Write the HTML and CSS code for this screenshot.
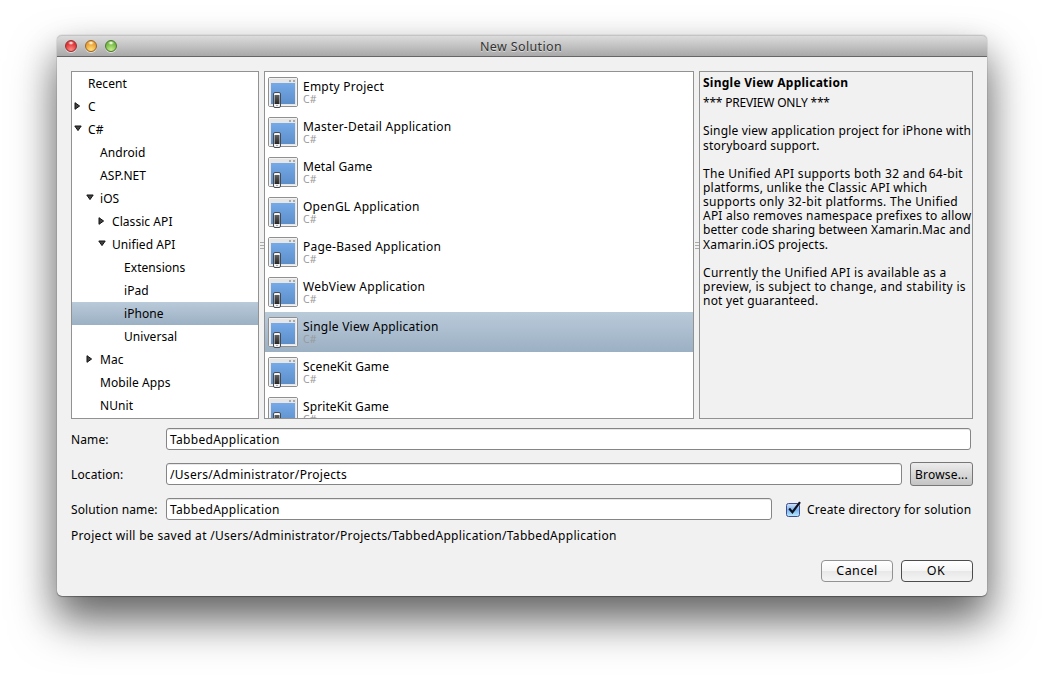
FILE: index.html
```
<!DOCTYPE html>
<html lang="en">
<head>
<meta charset="utf-8">
<title>New Solution</title>
<link rel="stylesheet" href="styles.css">
</head>
<body>
<svg class="defs" width="0" height="0" aria-hidden="true">
  <defs>
    <linearGradient id="blue" x1="0" y1="0" x2="0" y2="1"><stop offset="0" stop-color="#75a9e7"/><stop offset="1" stop-color="#5c8fca"/></linearGradient>
    <linearGradient id="screen" x1="0" y1="0" x2="0" y2="1"><stop offset="0" stop-color="#606060"/><stop offset="1" stop-color="#252525"/></linearGradient>
    <symbol id="project" viewBox="0 0 30 31">
      <rect x=".5" y=".5" width="29" height="29" rx="1.5" fill="#e6e6e6" stroke="#8f8f8f"/>
      <rect x="1.5" y="1.5" width="27" height="27" fill="none" stroke="#f2f2f2"/>
      <rect x="3" y="6" width="24" height="21" fill="url(#blue)"/>
      <path d="M21 3h2v2h-2zM25 3h2v2h-2z" fill="#aaa"/>
      <rect x="5.5" y="15.5" width="7" height="15" rx="1.5" fill="#f4f4f4" stroke="#444b55"/>
      <rect x="6.5" y="18" width="5" height="9" fill="url(#screen)"/>
      <path d="M8 28.5h2" stroke="#aaa"/>
    </symbol>
    <symbol id="right" viewBox="0 0 7 8"><path d="M1 .7v6.6L5.6 4z" fill="#444" stroke="#111"/></symbol>
    <symbol id="down" viewBox="0 0 8 7"><path d="M.8 1h6.4L4 5.6z" fill="#444" stroke="#111"/></symbol>
  </defs>
</svg>
<main class="window">
  <header class="titlebar">
    <div class="lights"><i class="light red"></i><i class="light amber"></i><i class="light green"></i></div>
    <h1 class="title">New Solution</h1>
  </header>
  <div class="content">
    <section class="panes">
      <ul class="tree">
        <li class="node l0"><span>Recent</span></li>
        <li class="node l0"><svg class="arrow"><use href="#right" width="7" height="8"/></svg><span>C</span></li>
        <li class="node l0"><svg class="arrow"><use href="#down" width="8" height="7"/></svg><span>C#</span></li>
        <li class="node l1"><span>Android</span></li>
        <li class="node l1"><span>ASP.NET</span></li>
        <li class="node l1"><svg class="arrow"><use href="#down" width="8" height="7"/></svg><span>iOS</span></li>
        <li class="node l2"><svg class="arrow"><use href="#right" width="7" height="8"/></svg><span>Classic API</span></li>
        <li class="node l2"><svg class="arrow"><use href="#down" width="8" height="7"/></svg><span>Unified API</span></li>
        <li class="node l3"><span>Extensions</span></li>
        <li class="node l3"><span>iPad</span></li>
        <li class="node l3 selected"><span>iPhone</span></li>
        <li class="node l3"><span>Universal</span></li>
        <li class="node l1"><svg class="arrow"><use href="#right" width="7" height="8"/></svg><span>Mac</span></li>
        <li class="node l1"><span>Mobile Apps</span></li>
        <li class="node l1"><span>NUnit</span></li>
      </ul>
      <div class="grip"></div>
      <ul class="templates">
        <li class="template"><svg class="icon"><use href="#project" width="30" height="31"/></svg><div><b>Empty Project</b><small>C#</small></div></li>
        <li class="template"><svg class="icon"><use href="#project" width="30" height="31"/></svg><div><b>Master-Detail Application</b><small>C#</small></div></li>
        <li class="template"><svg class="icon"><use href="#project" width="30" height="31"/></svg><div><b class="tight">Metal Game</b><small>C#</small></div></li>
        <li class="template"><svg class="icon"><use href="#project" width="30" height="31"/></svg><div><b>OpenGL Application</b><small>C#</small></div></li>
        <li class="template"><svg class="icon"><use href="#project" width="30" height="31"/></svg><div><b>Page-Based Application</b><small>C#</small></div></li>
        <li class="template"><svg class="icon"><use href="#project" width="30" height="31"/></svg><div><b>WebView Application</b><small>C#</small></div></li>
        <li class="template selected"><svg class="icon"><use href="#project" width="30" height="31"/></svg><div><b>Single View Application</b><small>C#</small></div></li>
        <li class="template"><svg class="icon"><use href="#project" width="30" height="31"/></svg><div><b class="tight">SceneKit Game</b><small>C#</small></div></li>
        <li class="template"><svg class="icon"><use href="#project" width="30" height="31"/></svg><div><b class="tight">SpriteKit Game</b><small>C#</small></div></li>
      </ul>
      <div class="grip"></div>
      <article class="details">
        <h2>Single View Application</h2>
        <p class="notice">*** PREVIEW ONLY ***</p>
        <p><span class="snug">Single view application project for iPhone with</span><br>storyboard support.</p>
        <p><span class="wide">The Unified API supports both 32 and 64-bit</span><br>platforms, unlike the Classic API which<br><span class="wide">supports only 32-bit platforms. The Unified</span><br>API also removes namespace prefixes to allow<br><span class="snugger">better code sharing between Xamarin.Mac and</span><br>Xamarin.iOS projects.</p>
        <p><span class="wide">Currently the Unified API is available as a<br>preview, is subject to change, and stability is</span><br>not yet guaranteed.</p>
      </article>
    </section>
    <section class="form">
      <div class="row name"><label>Name:</label><div class="field"><span>TabbedApplication</span></div></div>
      <div class="row location"><label>Location:</label><div class="field"><span>/Users/Administrator/Projects</span></div><button class="button browse"><span>Browse...</span></button></div>
      <div class="row solution"><label>Solution name:</label><div class="field"><span>TabbedApplication</span></div>
        <div class="check"><svg width="16" height="17" viewBox="0 0 16 17"><defs><linearGradient id="cb" x1="0" y1="0" x2="0" y2="1"><stop offset="0" stop-color="#d2e2f7"/><stop offset=".5" stop-color="#7db4f0"/><stop offset="1" stop-color="#b9ecff"/></linearGradient></defs><rect x=".5" y="2.5" width="13" height="13" rx="2" fill="url(#cb)" stroke="#414d8c"/><path d="M3.2 7.6 6.4 11.2 14 1.2" fill="none" stroke="#10131f" stroke-width="2.2"/></svg><span>Create directory for solution</span></div></div>
    </section>
    <p class="path">Project will be saved at /Users/Administrator/Projects/TabbedApplication/TabbedApplication</p>
    <footer class="actions"><button class="button"><span>Cancel</span></button><button class="button default"><span>OK</span></button></footer>
  </div>
</main>
</body>
</html>
```
FILE: styles.css
```
* { box-sizing: border-box; margin: 0; padding: 0; }
body { width: 1044px; height: 675px; padding: 35px 57px; overflow: hidden; background: #fff; font: 12px/14px "Noto Sans", "Open Sans", sans-serif; color: #000; }
ul { list-style: none; }
.defs { position: absolute; }
.window { width: 930px; height: 561px; border-radius: 5px; background: #f1f1f1; box-shadow: 0 0 1px rgba(0,0,0,.5), 0 1px 1px rgba(0,0,0,.3), 0 25px 46px rgba(0,0,0,.5), 0 16px 34px rgba(0,0,0,.22); overflow: hidden; }
.titlebar { display: grid; grid-template-columns: 80px 1fr 80px; align-items: center; height: 22px; border-bottom: 1px solid #666; border-radius: 5px 5px 0 0; background: linear-gradient(#dedede, #a9a9a9); box-shadow: inset 0 1px #c4c4c4; }
.lights { display: flex; gap: 8px; padding: 1px 0 0 8px; }
.light { width: 12px; height: 12px; border-radius: 50%; border: 1px solid; box-shadow: 0 1px #ddd; }
.red { border-color: #95302f; background: radial-gradient(ellipse 3px 2px at 50% 20%, #ffe0dc 20%, transparent), radial-gradient(circle at 50% 90%, #ff8e87, #df3437 65%); }
.amber { border-color: #9a6526; background: radial-gradient(ellipse 3px 2px at 50% 20%, #fff3cf 20%, transparent), radial-gradient(circle at 50% 90%, #ffe27a, #eaa038 65%); }
.green { border-color: #4c772d; background: radial-gradient(ellipse 3px 2px at 50% 20%, #effbe0 20%, transparent), radial-gradient(circle at 50% 90%, #c8f08c, #75b947 65%); }
.title { padding: 2px 2px 0 0; text-align: center; font-size: 12.5px; font-weight: 400; letter-spacing: .35px; color: #333; text-shadow: 0 1px rgba(255,255,255,.5); }
.content { padding: 14px 14px 0; }
.panes { display: grid; grid-template-columns: 188px 5px 430px 5px 274px; height: 348px; }
.tree, .templates, .details { border: 1px solid #929292; overflow: hidden; white-space: nowrap; }
.tree, .templates { background: #fff; }
.node { display: flex; align-items: center; height: 23px; letter-spacing: .06px; }
.arrow { width: 8px; height: 8px; margin: -1px 6px 0 -14px; overflow: visible; }
.l0 { padding-left: 16px; }
.l1 { padding-left: 28px; }
.l2 { padding-left: 40px; }
.l3 { padding-left: 52px; }
.selected { background: linear-gradient(#b9cad9, #9cb0c4); }
.grip { align-self: center; justify-self: center; width: 4px; height: 7px; background: repeating-linear-gradient(#aaa 0 1px, transparent 1px 3px); }
.template { display: flex; gap: 5px; height: 40px; padding: 5px 0 0 3px; }
.icon { width: 30px; height: 31px; overflow: visible; }
.template b { display: block; height: 14px; margin-top: 3px; font-weight: 400; letter-spacing: .24px; }
.template b.tight { letter-spacing: .1px; }
.template small { display: block; font-size: 10.5px; line-height: 10px; color: #999; }
.details { padding: 4px 0 0 3px; line-height: 14.1px; letter-spacing: .21px; }
.details h2 { font-size: 12px; line-height: 14px; margin-bottom: 6px; letter-spacing: .26px; }
.details p { margin-bottom: 14.4px; }
.details .notice { letter-spacing: -.2px; }
.snug { letter-spacing: .18px; }
.snugger { letter-spacing: .08px; }
.wide { letter-spacing: .31px; }
.form { display: grid; gap: 13px; margin-top: 9px; }
.row { display: flex; align-items: center; height: 22px; }
.row label { width: 95px; padding-top: 2px; letter-spacing: .12px; white-space: nowrap; }
.field { display: flex; align-items: center; height: 22px; padding: 2px 0 0 3px; border: 1px solid #858585; border-radius: 3px; background: #fff; box-shadow: inset 0 1px #e8e8e8; letter-spacing: .3px; }
.name .field { width: 805px; }
.location .field { width: 736px; }
.solution .field { width: 606px; }
.button { height: 22px; width: 72px; border: 1px solid #929292; border-radius: 4px; background: linear-gradient(#fff 0, #f5f5f5 50%, #e8e8e8 51%, #f4f4f4); font: inherit; font-size: 12.5px; letter-spacing: .4px; color: #000; }
.default { padding-right: 2px; border-color: #4c4c4c; }
.browse { width: 63px; height: 24px; padding-top: 1px; margin-left: 8px; border-color: #777; border-radius: 3px; background: linear-gradient(#ececec, #c4c4c4); font-size: 12px; letter-spacing: .18px; }
.check { display: flex; align-items: center; gap: 5px; margin-left: 14px; letter-spacing: .2px; white-space: nowrap; }
.check span { padding-top: 2px; }
.path { margin-top: 9px; letter-spacing: .31px; white-space: nowrap; }
.actions { display: flex; justify-content: flex-end; gap: 8px; margin-top: 17px; }
```
